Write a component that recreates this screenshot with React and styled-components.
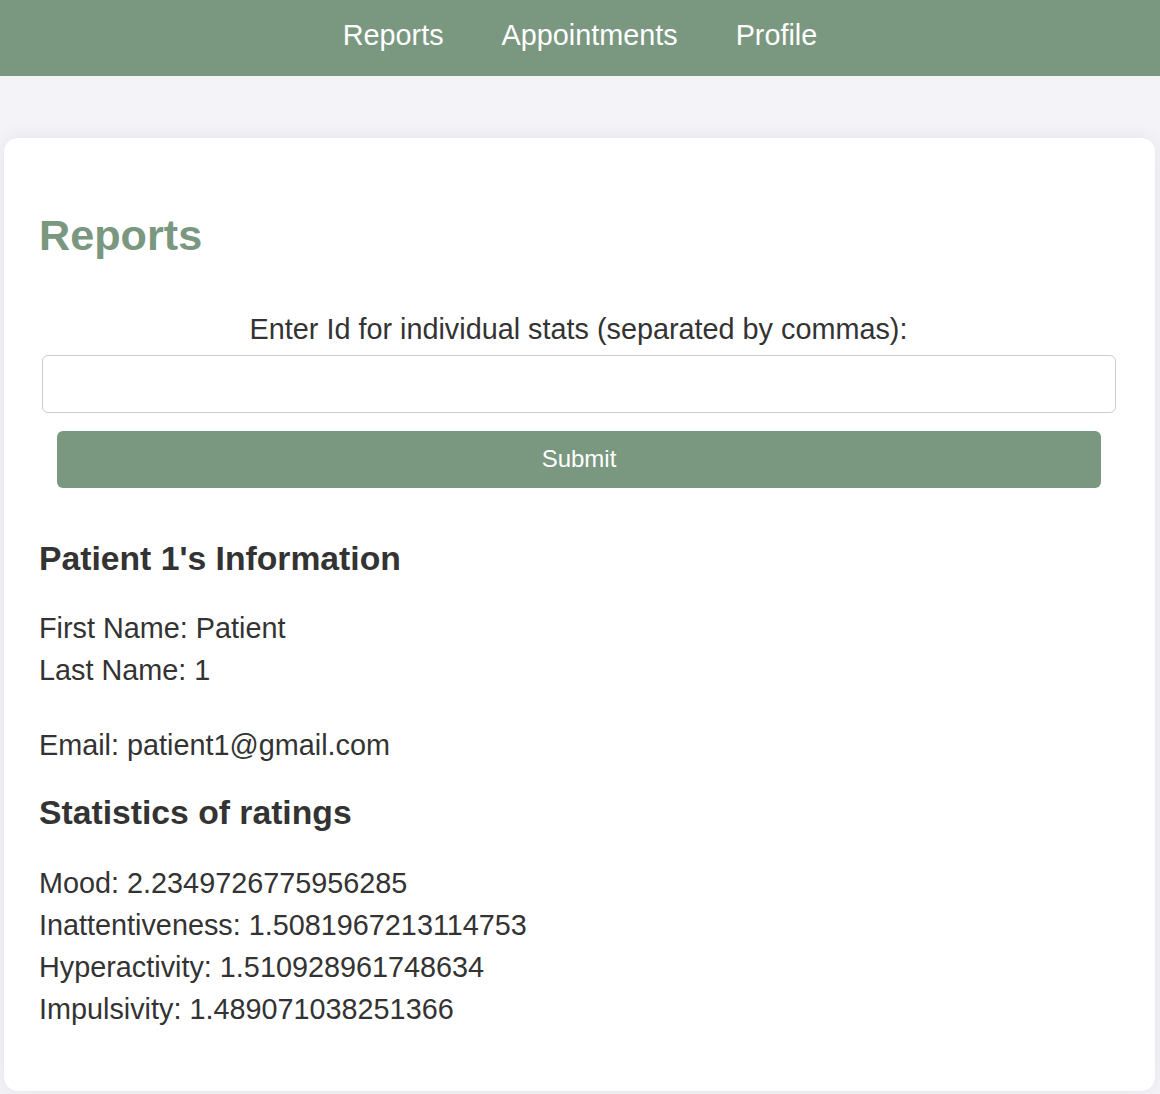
import React, {useState} from 'react';
import styled, {createGlobalStyle} from "styled-components";

const GlobalStyle = createGlobalStyle `
  body {
    margin: 0;
    background-color: #f4f4f8;
    font-family: "Liberation Sans", Arial, Helvetica, sans-serif;
    color: #333;
  }
`;

const NavBar = styled.nav `
  height: 76px;
  box-sizing: border-box;
  padding-top: 19px;
  background-color: #7a9780;
  display: flex;
  justify-content: center;
  align-items: flex-start;
  gap: 58px;
`;

const NavLink = styled.a `
  color: white;
  font-size: 28.8px;
  line-height: 33px;
  text-decoration: none;
  cursor: pointer;
`;

const Main = styled.main `
  padding: 62px 5px 4px 4px;
`;

const Card = styled.div `
  background-color: white;
  border-radius: 14px;
  box-shadow: 0 0 18px rgba(40, 40, 80, 0.09);
  padding: 36px 37px 61px 35px;
`;

const Title = styled.h2 `
  margin: 37px 0 47px;
  font-size: 43.2px;
  line-height: 49.6px;
  font-weight: bold;
  color: #7a9780;
`;

const Form = styled.form `
  display: flex;
  flex-direction: column;
`;

const Label = styled.label `
  text-align: center;
  font-size: 28.8px;
  line-height: 42px;
`;

const Input = styled.input `
  margin: 5px 2px 0 3px;
  height: 58px;
  box-sizing: border-box;
  border: 1px solid #cccccc;
  border-radius: 6px;
  font-size: 24px;
  padding: 0 14px;
  font-family: inherit;
  outline: none;
`;

const Button = styled.button `
  margin: 18px 17px 0 18px;
  height: 57px;
  border: none;
  border-radius: 6px;
  background-color: #7a9780;
  color: white;
  font-size: 24px;
  font-family: inherit;
  cursor: pointer;
`;

const SectionTitle = styled.h3 `
  margin: ${props => props.$top}px 0 0;
  font-size: 33.7px;
  line-height: 38.7px;
  font-weight: bold;
`;

const Line = styled.div `
  font-size: 28.8px;
  line-height: 42px;
  margin-top: ${props => props.$top || 0}px;
`;

const patient = {
    id: 1,
    firstName: "Patient",
    lastName: "1",
    email: "patient1@gmail.com",
};

const stats = [
    ["Mood", "2.2349726775956285"],
    ["Inattentiveness", "1.5081967213114753"],
    ["Hyperactivity", "1.510928961748634"],
    ["Impulsivity", "1.489071038251366"],
];

const App = () => {
    const [ids, setIds] = useState("");

    const handleSubmit = (event) => {
        event.preventDefault(); // no reload
    }

    return (
        <>
            <GlobalStyle/>
            <NavBar>
                <NavLink>Reports</NavLink>
                <NavLink>Appointments</NavLink>
                <NavLink>Profile</NavLink>
            </NavBar>
            <Main>
                <Card>
                    <Title>Reports</Title>
                    <Form onSubmit={handleSubmit}>
                        <Label htmlFor="ids">Enter Id for individual stats (separated by commas):</Label>
                        <Input id="ids" value={ids} onChange={(e) => setIds(e.target.value)}/>
                        <Button type="submit">Submit</Button>
                    </Form>
                    <SectionTitle $top={51}>Patient {patient.id}'s Information</SectionTitle>
                    <Line $top={30}>First Name: {patient.firstName}</Line>
                    <Line>Last Name: {patient.lastName}</Line>
                    <Line $top={33}>Email: {patient.email}</Line>
                    <SectionTitle $top={27}>Statistics of ratings</SectionTitle>
                    {stats.map(([name, value], i) => (
                        <Line key={name} $top={i === 0 ? 30 : 0}>{name}: {value}</Line>
                    ))}
                </Card>
            </Main>
        </>
    );
};

export default App;
